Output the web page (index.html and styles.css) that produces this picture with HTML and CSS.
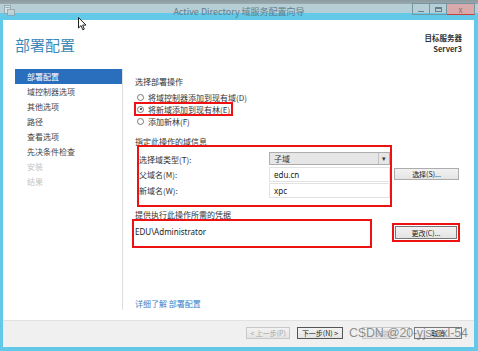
FILE: index.html
```html
<!DOCTYPE html>
<html lang="zh-CN">
<head>
    <meta charset="UTF-8">
    <title>Active Directory 域服务配置向导</title>
    <link rel="stylesheet" href="styles.css">
</head>
<body>
    <div class="frame">
        <div class="titlebar">
            <div class="tb-left">
                <svg class="app-icon" width="11" height="11" viewBox="0 0 11 11">
                    <rect x="0.5" y="0.5" width="6" height="8" fill="#dfe7ea" stroke="#8fa3aa"/>
                    <rect x="3.5" y="4.5" width="7" height="6" fill="#c9d5d9" stroke="#8fa3aa"/>
                    <line x1="1.5" y1="2.5" x2="5.5" y2="2.5" stroke="#8fa3aa"/>
                </svg>
            </div>
            <div class="tb-title">Active Directory 域服务配置向导</div>
            <div class="tb-right">
                <span class="wbtn min"><i></i></span>
                <span class="wbtn max"><i></i></span>
                <span class="wbtn close">x</span>
            </div>
        </div>

        <div class="window">
            <div class="page">
                <div class="page-head">
                    <h1>部署配置</h1>
                    <div class="target">
                        <div>目标服务器</div>
                        <div>Server3</div>
                    </div>
                </div>

                <div class="page-body">
                    <ul class="nav">
                        <li class="active">部署配置</li>
                        <li>域控制器选项</li>
                        <li>其他选项</li>
                        <li>路径</li>
                        <li>查看选项</li>
                        <li>先决条件检查</li>
                        <li class="off">安装</li>
                        <li class="off">结果</li>
                    </ul>

                    <div class="content">
                        <div class="caption">选择部署操作</div>
                        <div class="radios">
                            <div class="radio"><span class="dot"></span>将域控制器添加到现有域(D)</div>
                            <div class="radio marked"><span class="dot on"></span>将新域添加到现有林(E)</div>
                            <div class="radio"><span class="dot"></span>添加新林(F)</div>
                        </div>

                        <div class="caption gap">指定此操作的域信息</div>
                        <div class="domain-row">
                            <div class="domain-box">
                                <div class="field-row">
                                    <span class="label">选择域类型(T):</span>
                                    <span class="select">子域<b class="arrow">▾</b></span>
                                </div>
                                <div class="field-row">
                                    <span class="label">父域名(M):</span>
                                    <span class="input">edu.cn</span>
                                </div>
                                <div class="field-row">
                                    <span class="label">新域名(W):</span>
                                    <span class="input">xpc</span>
                                </div>
                            </div>
                            <span class="btn pick">选择(S)...</span>
                        </div>

                        <div class="caption cred-title">提供执行此操作所需的凭据</div>
                        <div class="cred-row">
                            <div class="cred-box">EDU\Administrator</div>
                            <div class="change-box"><span class="btn">更改(C)...</span></div>
                        </div>

                        <a class="more" href="#">详细了解 部署配置</a>
                    </div>
                </div>
            </div>

            <div class="footer">
                <span class="btn fbtn prev">&lt; 上一步(P)</span>
                <span class="btn fbtn next">下一步(N) &gt;</span>
                <span class="btn fbtn install">安装(I)</span>
                <span class="btn fbtn cancel">取消</span>
                <span class="watermark">CSDN @20-yjs-zxl-54</span>
            </div>
        </div>
    </div>

    <svg class="cursor" width="9" height="14" viewBox="0 0 9 14">
        <path d="M0.5 0.5 L0.5 11 L3 8.6 L4.8 12.8 L6.3 12.1 L4.6 8.1 L8 8.1 Z" fill="#fff" stroke="#222" stroke-width="1"/>
    </svg>
</body>
</html>
```

FILE: styles.css
```css
* {
    box-sizing: border-box;
}

body {
    margin: 0;
    width: 478px;
    height: 351px;
    overflow: hidden;
    position: relative;
    font-family: "Noto Sans CJK SC", "Noto Sans", sans-serif;
    background: #62c9e9;
}

.frame {
    width: 478px;
    height: 351px;
    padding: 0 4px 4px 3px;
    display: flex;
    flex-direction: column;
}

/* title bar */
.titlebar {
    margin: 0 -4px 0 -3px;
    height: 20px;
    display: grid;
    grid-template-columns: 1fr auto 1fr;
    align-items: start;
    background: linear-gradient(to bottom, #8c9ba0 0, #9aa9ae 4px, #b6ced6 4px, #b6ced6 13px, #62c9e9 13px);
}

.tb-left {
    padding: 5px 0 0 4px;
}

.app-icon {
    display: block;
    opacity: 0.8;
}

.tb-title {
    margin-top: 6px;
    font-size: 9px;
    line-height: 12px;
    color: #5f808b;
    white-space: nowrap;
}

.tb-right {
    display: flex;
    justify-content: flex-end;
    padding: 3px 3px 0 0;
}

.wbtn {
    height: 12px;
    border: 1px solid #7396a1;
    display: flex;
    align-items: center;
    justify-content: center;
    font-size: 8px;
    color: #8e6d70;
}

.wbtn.min {
    width: 18px;
}

.wbtn.min i {
    width: 6px;
    height: 1px;
    margin-top: 4px;
    background: #65808a;
}

.wbtn.max {
    width: 17px;
    border-left: none;
}

.wbtn.max i {
    width: 7px;
    height: 5px;
    border: 1px solid #65808a;
    border-top-width: 2px;
}

.wbtn.close {
    width: 28px;
    border-left: none;
    background: #d9a9ab;
    border-bottom: 1px solid #c9403f;
}

/* window */
.window {
    flex: 1;
    display: flex;
    flex-direction: column;
    background: #fff;
}

.page {
    flex: 1;
    display: flex;
    flex-direction: column;
    padding: 0 12px 10px 12px;
}

.page-head {
    display: flex;
    justify-content: space-between;
    align-items: flex-start;
}

.page-head h1 {
    margin: 15px 0 0;
    font-size: 15px;
    line-height: 20px;
    font-weight: normal;
    color: #3b88b6;
}

.target {
    margin-top: 12px;
    text-align: right;
    font-size: 7.5px;
    line-height: 11px;
    font-weight: bold;
    color: #333;
}

.page-body {
    flex: 1;
    display: flex;
    margin-top: 14px;
}

.nav {
    list-style: none;
    margin: 0;
    padding: 0;
    width: 107px;
}

.nav li {
    height: 15px;
    line-height: 15px;
    padding-left: 12px;
    font-size: 8px;
    color: #444;
}

.nav li.active {
    background: #2a6fbd;
    color: #fff;
}

.nav li.off {
    color: #c3c3c3;
}

.content {
    flex: 1;
    display: flex;
    flex-direction: column;
    border-left: 1px solid #dedede;
    padding: 7px 0 0 12px;
    font-size: 8px;
    color: #333;
}

.caption {
    line-height: 12px;
}

.caption.gap {
    margin-top: 9px;
}

.radios {
    margin-top: 3px;
}

.radio {
    display: flex;
    align-items: center;
    width: fit-content;
    height: 12px;
    padding: 0 2px;
}

.radio.marked {
    outline: 2px solid #ee1111;
    outline-offset: -1px;
}

.dot {
    width: 7px;
    height: 7px;
    margin-right: 4px;
    border-radius: 50%;
    border: 1px solid #777;
    background: #fff;
    position: relative;
}

.dot.on::after {
    content: "";
    position: absolute;
    left: 1.5px;
    top: 1.5px;
    width: 2px;
    height: 2px;
    border-radius: 50%;
    background: #222;
}

/* domain info */
.domain-row {
    display: flex;
    align-items: flex-start;
    margin-top: -3px;
}

.domain-box {
    width: 255px;
    margin-left: 2px;
    border: 2px solid #ee1111;
    padding: 5px 0 7px;
    display: flex;
    flex-direction: column;
    gap: 1px;
}

.field-row {
    display: flex;
    align-items: center;
}

.label {
    width: 130px;
}

.select,
.input {
    width: 121px;
    display: flex;
    align-items: center;
    padding-left: 4px;
}

.select {
    height: 13px;
    background: #e6e6e6;
    border: 1px solid #adadad;
    margin-bottom: 1px;
}

.arrow {
    margin-left: auto;
    width: 11px;
    height: 11px;
    border-left: 1px solid #c2c2c2;
    font-size: 7px;
    line-height: 11px;
    text-align: center;
    font-weight: normal;
}

.input {
    height: 15px;
    background: #fff;
    border: 1px solid #e2e2e2;
    font-family: "Noto Sans", sans-serif;
    color: #222;
}

.btn {
    display: flex;
    align-items: center;
    justify-content: center;
    height: 12px;
    font-size: 7px;
    color: #222;
    background: linear-gradient(to bottom, #f2f2f2, #e4e4e4);
    border: 1px solid #acacac;
    white-space: nowrap;
}

.btn.pick {
    width: 65px;
    margin: 23px 0 0 2px;
}

/* credentials */
.cred-title {
    margin-top: 2px;
}

.cred-row {
    display: flex;
    align-items: flex-start;
    margin-top: -2px;
}

.cred-box {
    width: 240px;
    height: 29px;
    margin-left: -3px;
    border: 2px solid #ee1111;
    padding: 3px 0 0 1px;
    line-height: 16px;
    font-family: "Noto Sans", sans-serif;
    color: #222;
}

.change-box {
    width: 68px;
    height: 19px;
    margin: 4px 0 0 20px;
    border: 2px solid #ee1111;
    padding: 1px;
}

.change-box .btn {
    height: 13px;
    border-color: #777;
}

.more {
    margin-top: auto;
    line-height: 12px;
    color: #3c82c8;
    text-decoration: none;
}

/* footer */
.footer {
    position: relative;
    height: 27px;
    display: flex;
    align-items: flex-start;
    justify-content: flex-end;
    padding: 6px 12px 0 0;
    background: #f0f0f0;
    border-top: 1px solid #e2e2e2;
}

.fbtn.prev {
    width: 44px;
    color: #a5a5a5;
    border-color: #c8c8c8;
}

.fbtn.next {
    width: 46px;
    margin-left: 7px;
    border-color: #555;
}

.fbtn.install {
    width: 48px;
    margin-left: 19px;
    color: #b8b8b8;
    border-color: #c8c8c8;
}

.fbtn.cancel {
    width: 48px;
    margin-left: 4px;
    border-color: #777;
}

.watermark {
    position: absolute;
    left: 346px;
    top: 5px;
    font-family: "Liberation Sans", sans-serif;
    font-size: 12.5px;
    line-height: 15px;
    color: rgba(110, 110, 110, 0.75);
    letter-spacing: -0.2px;
    white-space: nowrap;
}

.cursor {
    position: absolute;
    left: 78px;
    top: 17px;
}
```
